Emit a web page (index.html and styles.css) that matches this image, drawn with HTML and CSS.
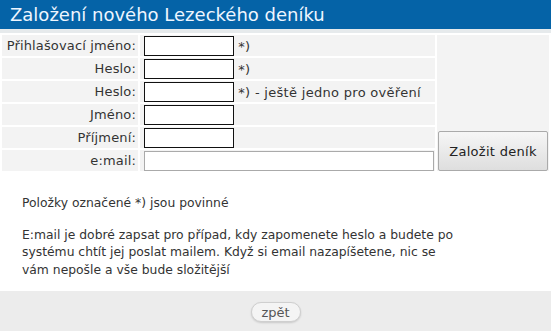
FILE: index.html
```html
<!DOCTYPE html>
<html lang="cs">
<head>
    <meta charset="UTF-8">
    <title>Založení nového Lezeckého deníku</title>
    <link rel="stylesheet" href="styles.css">
</head>
<body>
    <div class="page">
        <h1 class="title">Založení nového Lezeckého deníku</h1>
        <table class="form">
            <colgroup>
                <col class="c-label">
                <col class="c-field">
                <col class="c-submit">
            </colgroup>
            <tr>
                <td class="label">Přihlašovací jméno:</td>
                <td class="field"><input type="text" class="short"> <span class="note">*)</span></td>
                <td class="submit" rowspan="6"><button class="create">Založit deník</button></td>
            </tr>
            <tr>
                <td class="label">Heslo:</td>
                <td class="field"><input type="password" class="short"> <span class="note">*)</span></td>
            </tr>
            <tr>
                <td class="label">Heslo:</td>
                <td class="field"><input type="password" class="short"> <span class="note">*) - ještě jedno pro ověření</span></td>
            </tr>
            <tr>
                <td class="label">Jméno:</td>
                <td class="field"><input type="text" class="short"></td>
            </tr>
            <tr>
                <td class="label">Příjmení:</td>
                <td class="field"><input type="text" class="short"></td>
            </tr>
            <tr>
                <td class="label">e:mail:</td>
                <td class="field"><input type="text" class="long"></td>
            </tr>
        </table>
        <div class="info">
            <p>Položky označené *) jsou povinné</p>
            <p>E:mail je dobré zapsat pro případ, kdy zapomenete heslo a budete po systému chtít jej poslat mailem. Když si email nazapíšetene, nic se vám nepošle a vše bude složitější</p>
        </div>
    </div>
    <div class="footer">
        <button class="back">zpět</button>
    </div>
</body>
</html>
```

FILE: styles.css
```css
body {
    margin: 0;
    background-color: #ececec;
    font-family: "DejaVu Sans", Verdana, sans-serif;
    font-size: 13px;
    letter-spacing: 0.15px;
    color: #333;
}
.page {
    background: #fff;
    padding-bottom: 12px;
}
.title {
    margin: 0;
    height: 29px;
    line-height: 29px;
    padding-left: 10px;
    background-color: #0563a7;
    color: #eef6ff;
    font-size: 18px;
    font-weight: normal;
    letter-spacing: 0;
    border-bottom: 4px solid #e6eaec;
}
.form {
    width: 551px;
    table-layout: fixed;
    border-collapse: separate;
    border-spacing: 2px;
}
.c-label {
    width: 136px;
}
.c-field {
    width: 295px;
}
.c-submit {
    width: 112px;
}
.form td {
    background-color: #f3f3f3;
    padding: 0;
    height: 21px;
    white-space: nowrap;
}
.label {
    text-align: right;
    padding-right: 2px !important;
}
.field {
    padding-left: 4px !important;
}
.field input {
    box-sizing: border-box;
    height: 20px;
    margin: 0;
    padding: 1px 3px;
    vertical-align: middle;
    font-family: inherit;
    font-size: 12px;
    background: #fff;
}
.short {
    width: 90px;
    border: 1px solid #111;
}
.long {
    width: 290px;
    border: 1px solid #aaa;
}
.note {
    vertical-align: middle;
    letter-spacing: 0.3px;
}
.submit {
    vertical-align: bottom;
    padding: 0 1px !important;
}
.create {
    display: block;
    width: 110px;
    height: 40px;
    padding: 0;
    font-family: inherit;
    font-size: 13px;
    letter-spacing: 0.3px;
    color: #222;
    background: linear-gradient(#f6f6f6, #dedede);
    border: 1px solid #aaa;
    border-radius: 2px;
}
.info {
    width: 438px;
    padding: 22px 22px 0;
    font-size: 12.35px;
    letter-spacing: 0;
    line-height: 17.5px;
}
.info p {
    margin: 0 0 14px;
}
.info p:last-child {
    margin-bottom: 0;
}
.footer {
    padding: 11px 0 8px;
    text-align: center;
}
.back {
    width: 50px;
    height: 20px;
    padding: 0;
    font-family: inherit;
    font-size: 13px;
    color: #555;
    background: #f4f4f4;
    border: 1px solid #cfcfcf;
    border-radius: 10px;
    box-shadow: 0 1px 2px rgba(0,0,0,0.15);
}
```
